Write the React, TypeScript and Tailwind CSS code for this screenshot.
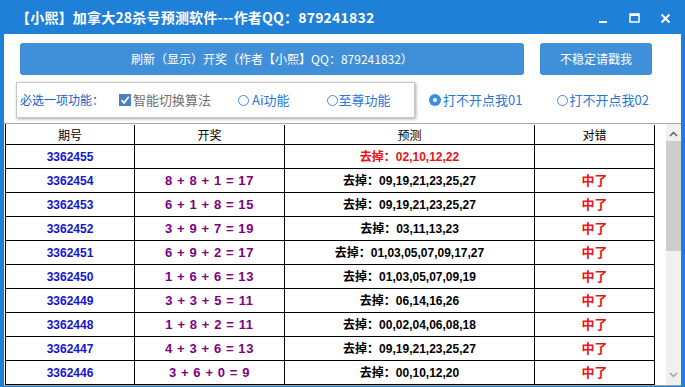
import React from "react"

const rows = [
    { id: "3362455", draw: "", pred: "去掉：02,10,12,22", hit: "", hot: true },
    { id: "3362454", draw: "8 + 8 + 1 = 17", pred: "去掉：09,19,21,23,25,27", hit: "中了" },
    { id: "3362453", draw: "6 + 1 + 8 = 15", pred: "去掉：09,19,21,23,25,27", hit: "中了" },
    { id: "3362452", draw: "3 + 9 + 7 = 19", pred: "去掉：03,11,13,23", hit: "中了" },
    { id: "3362451", draw: "6 + 9 + 2 = 17", pred: "去掉：01,03,05,07,09,17,27", hit: "中了" },
    { id: "3362450", draw: "1 + 6 + 6 = 13", pred: "去掉：01,03,05,07,09,19", hit: "中了" },
    { id: "3362449", draw: "3 + 3 + 5 = 11", pred: "去掉：06,14,16,26", hit: "中了" },
    { id: "3362448", draw: "1 + 8 + 2 = 11", pred: "去掉：00,02,04,06,08,18", hit: "中了" },
    { id: "3362447", draw: "4 + 3 + 6 = 13", pred: "去掉：09,19,21,23,25,27", hit: "中了" },
    { id: "3362446", draw: "3 + 6 + 0 = 9", pred: "去掉：00,10,12,20", hit: "中了" },
]

const cjk = "font-['Noto_Sans_CJK_SC',sans-serif]"
const num = "font-['Liberation_Sans','Noto_Sans_CJK_SC',sans-serif]"

const Radio = ({ on = false, className = "" }: { on?: boolean; className?: string }) =>
    on ? (
        <span className={`flex h-[12px] w-[12px] shrink-0 items-center justify-center rounded-full bg-[#3b8ee0] ${className}`}>
            <span className="block h-[4px] w-[4px] rounded-full bg-white" />
        </span>
    ) : (
        <span className={`block h-[11px] w-[11px] shrink-0 rounded-full border border-[#3b8ee0] bg-white ${className}`} />
    )

const App = () => {
    return (
        <div className={`flex h-[387px] w-[685px] flex-col overflow-hidden bg-[#1f80d8] ${cjk}`}>
            {/* title bar */}
            <div className="flex h-[34px] items-center pl-[16px] pr-[14px] text-white">
                <span className="text-[14px] font-bold leading-none tracking-[0.2px]">
                    【小熙】加拿大28杀号预测软件---作者QQ：879241832
                </span>
                <div className="ml-auto flex items-center gap-[20px] pt-[2px]">
                    <svg width="11" height="11" viewBox="0 0 11 11">
                        <rect x="1" y="8" width="8" height="2" fill="white" />
                    </svg>
                    <svg width="11" height="11" viewBox="0 0 11 11">
                        <rect x="1" y="1" width="9" height="8" fill="none" stroke="white" strokeWidth="1.5" />
                        <rect x="1" y="1" width="9" height="2" fill="white" />
                    </svg>
                    <svg width="11" height="11" viewBox="0 0 11 11">
                        <path d="M1.5 1.5 L9.5 9.5 M9.5 1.5 L1.5 9.5" stroke="white" strokeWidth="2" />
                    </svg>
                </div>
            </div>

            {/* client */}
            <div className="mx-[4px] flex h-[352px] flex-col border-b border-[#a0a0a0] bg-white">
                <div className="flex gap-[16px] pl-[16px] pt-[9px]">
                    <button
                        type="button"
                        className="h-[32px] w-[504px] rounded-[3px] bg-[#4090d9] text-[12px] text-white"
                    >
                        刷新（显示）开奖（作者【小熙】QQ：879241832）
                    </button>
                    <button
                        type="button"
                        className="h-[32px] w-[112px] rounded-[3px] bg-[#4090d9] text-[12px] text-white"
                    >
                        不稳定请戳我
                    </button>
                </div>

                <div className="mt-[7px] flex h-[36px] items-center">
                    <div className="ml-[12px] flex h-[36px] w-[399px] items-center border border-[#c8c8c8] pl-[3px] shadow-[1px_1px_3px_rgba(0,0,0,0.35)]">
                        <span className="text-[12px] text-[#1a5cc8]">必选一项功能：</span>
                        <span className="ml-[15px] flex h-[12px] w-[12px] items-center justify-center bg-[#4a7fc0]">
                            <svg width="10" height="10" viewBox="0 0 10 10">
                                <path d="M1.5 5 L4 7.8 L8.8 1.8" fill="none" stroke="white" strokeWidth="1.8" />
                            </svg>
                        </span>
                        <span className="ml-[2px] text-[13px] text-[#707070]">智能切换算法</span>
                        <Radio className="ml-[27px]" />
                        <span className="ml-[3px] text-[13px] text-[#2a78d6]">Ai功能</span>
                        <Radio className="ml-[37px]" />
                        <span className="ml-[1px] text-[13px] text-[#2a78d6]">至尊功能</span>
                    </div>
                    <Radio on className="ml-[14px]" />
                    <span className="ml-[2px] text-[13px] text-[#2a78d6]">打不开点我01</span>
                    <Radio className="ml-[35px]" />
                    <span className="ml-[1px] text-[13px] text-[#2a78d6]">打不开点我02</span>
                </div>

                {/* list */}
                <div className="mt-[5px] flex min-h-0 flex-1 border-t border-[#a8a8a8] pl-[1px]">
                    <div className="flex min-h-0 flex-col overflow-hidden">
                        <div className="flex h-[25px] border-b border-l border-black pt-[1px] text-[12px] text-black">
                            <div className="flex w-[129px] items-center justify-center border-r border-black">期号</div>
                            <div className="flex w-[150px] items-center justify-center border-r border-black">开奖</div>
                            <div className="flex w-[250px] items-center justify-center border-r border-black">预测</div>
                            <div className="flex w-[120px] items-center justify-center border-r border-black">对错</div>
                        </div>
                        {rows.map((r) => (
                            <div key={r.id} className={`flex h-[24px] shrink-0 border-b border-l border-black font-bold ${num}`}>
                                <div className="flex w-[129px] items-center justify-center border-r border-black text-[12px] text-[#1414cc]">
                                    {r.id}
                                </div>
                                <div className="flex w-[150px] items-center justify-center whitespace-pre border-r border-black text-[13px] tracking-[0.6px] text-[#800080]">
                                    {r.draw}
                                </div>
                                <div
                                    className={`flex w-[250px] items-center justify-center border-r border-black text-[12px] ${
                                        r.hot ? "text-[#ee1111]" : "text-black"
                                    }`}
                                >
                                    {r.pred}
                                </div>
                                <div className="flex w-[120px] items-center justify-center border-r border-black text-[13px] text-[#ee1111]">
                                    {r.hit}
                                </div>
                            </div>
                        ))}
                    </div>

                    {/* scrollbar */}
                    <div className="ml-auto flex w-[15px] flex-col bg-[#f0f0f0]">
                        <div className="flex h-[17px] items-center justify-center pt-[2px]">
                            <svg width="9" height="6" viewBox="0 0 9 6">
                                <path d="M1 5 L4.5 1.5 L8 5" fill="none" stroke="#606060" strokeWidth="1.5" />
                            </svg>
                        </div>
                        <div className="h-[110px] bg-[#cdcdcd]" />
                        <div className="flex-1" />
                        <div className="flex h-[17px] items-center justify-center pb-[4px]">
                            <svg width="9" height="6" viewBox="0 0 9 6">
                                <path d="M1 1 L4.5 4.5 L8 1" fill="none" stroke="#a0a0a0" strokeWidth="1.5" />
                            </svg>
                        </div>
                    </div>
                </div>
            </div>
        </div>
    )
}

export default App
